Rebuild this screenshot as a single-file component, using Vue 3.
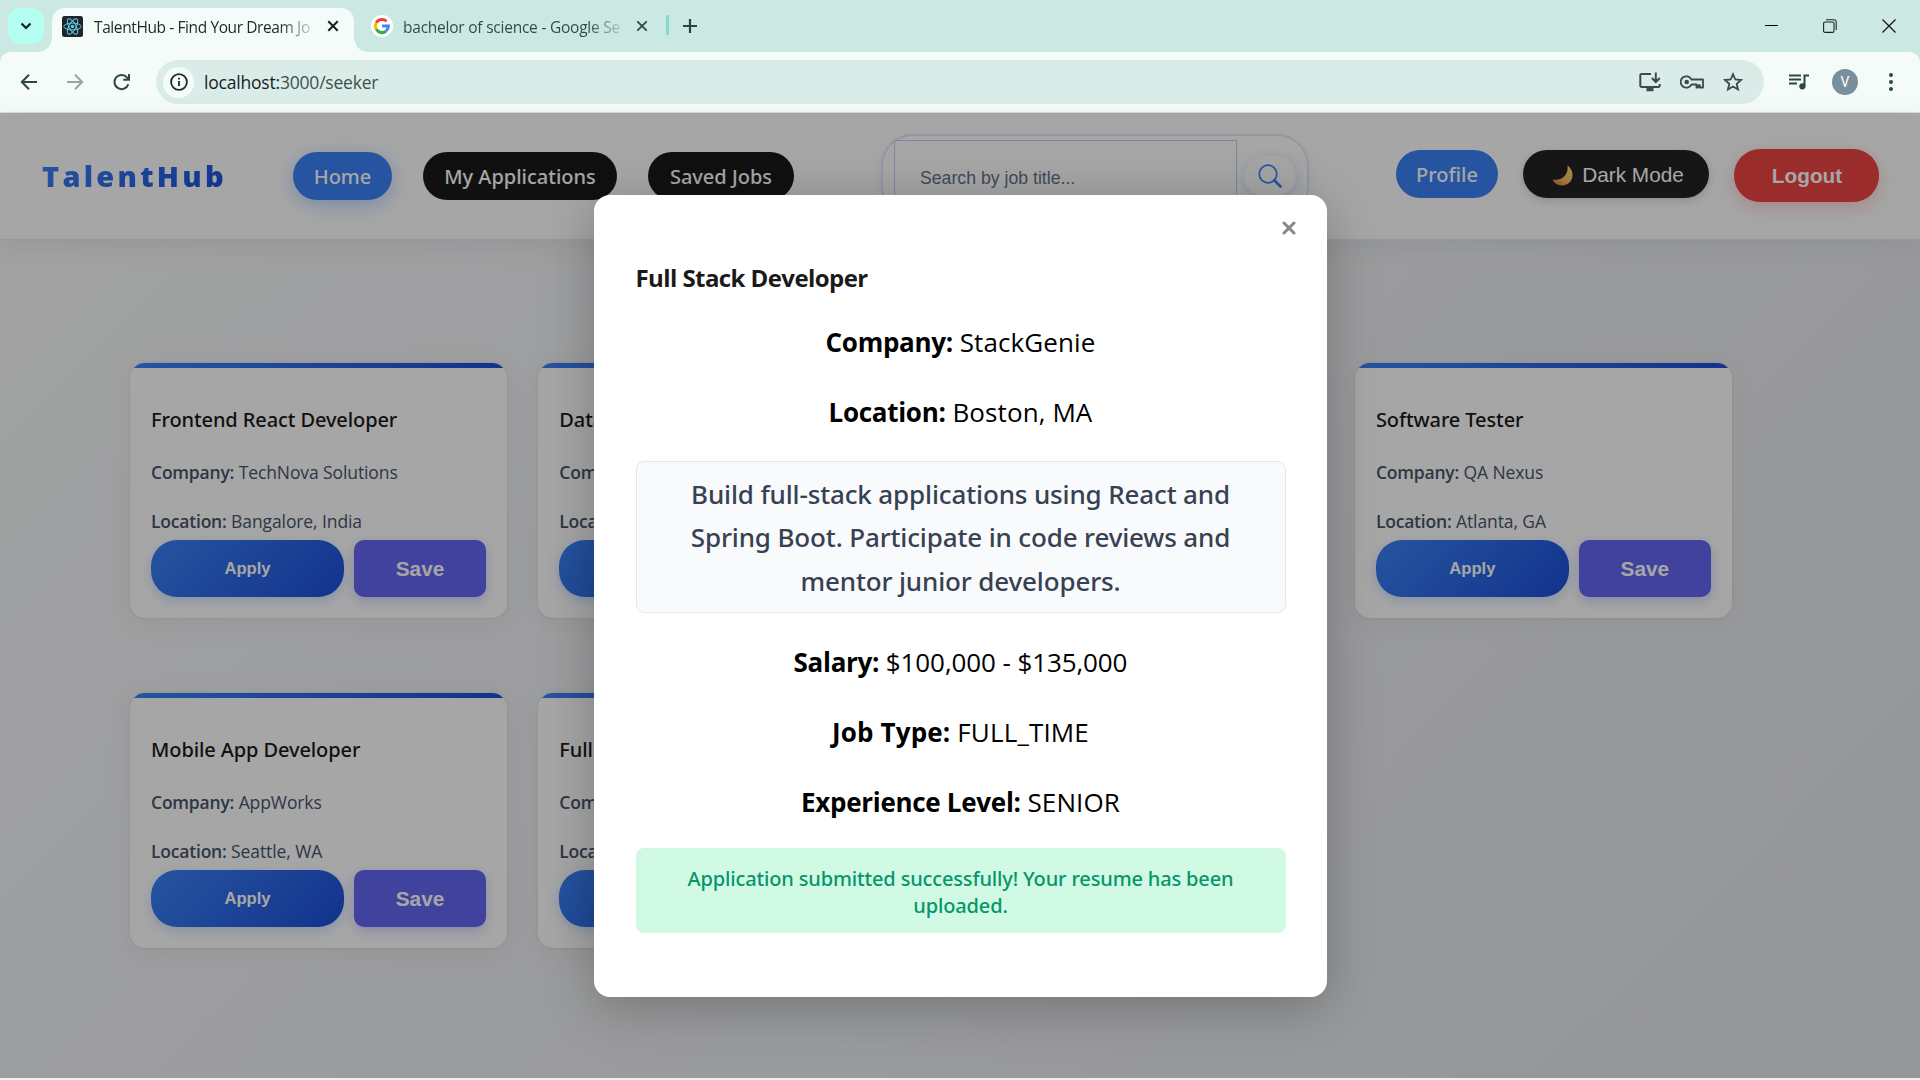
<script setup>
const jobs = [
  { title: 'Frontend React Developer', company: 'TechNova Solutions', location: 'Bangalore, India', row: 1, col: 1 },
  { title: 'Data', company: '', location: '', row: 1, col: 2 },
  { title: 'Software Tester', company: 'QA Nexus', location: 'Atlanta, GA', row: 1, col: 4 },
  { title: 'Mobile App Developer', company: 'AppWorks', location: 'Seattle, WA', row: 2, col: 1 },
  { title: 'Full Stack Developer', company: 'StackGenie', location: 'Boston, MA', row: 2, col: 2 },
]
</script>

<template>
  <div class="window">
    <div class="tabstrip">
      <button class="tab-search">
        <svg width="12" height="8" viewBox="0 0 12 8"><path d="M1.5 1.5 6 6l4.500-4.500" fill="none" stroke="#10201d" stroke-width="2.200" /></svg>
      </button>
      <div class="tab active">
        <svg class="favicon" width="21" height="21" viewBox="0 0 21 21">
          <rect width="21" height="21" rx="2.500" fill="#212429" />
          <g fill="none" stroke="#5ecbe8" stroke-width="1">
            <ellipse cx="10.500" cy="10.500" rx="8.700" ry="3.400" />
            <ellipse cx="10.500" cy="10.500" rx="8.700" ry="3.400" transform="rotate(60 10.5 10.5)" />
            <ellipse cx="10.500" cy="10.500" rx="8.700" ry="3.400" transform="rotate(120 10.5 10.5)" />
          </g>
          <circle cx="10.500" cy="10.500" r="1.700" fill="#5ecbe8" />
        </svg>
        <span class="tab-title t1">TalentHub - Find Your Dream Jo</span>
        <svg class="x" width="12" height="12" viewBox="0 0 12 12"><path d="M1.300 1.300 10.700 10.700M10.700 1.300 1.300 10.700" stroke="#141f1d" stroke-width="2" /></svg>
      </div>
      <div class="tab">
        <svg class="favicon" width="22" height="22" viewBox="0 0 22 22">
          <circle cx="11" cy="11" r="11" fill="#fff" />
          <g fill="none" stroke-width="3">
            <path d="M5.300 7.700A6.500 6.500 0 0 1 15.500 6.300" stroke="#ea4335" />
            <path d="M5.300 7.700a6.500 6.500 0 0 0 0 6.600" stroke="#fbbc05" />
            <path d="M5.300 14.300a6.500 6.500 0 0 0 9.700 1.900" stroke="#34a853" />
            <path d="M15 16.200A6.500 6.500 0 0 0 17.400 11.100H11" stroke="#4285f4" />
          </g>
        </svg>
        <span class="tab-title t2">bachelor of science - Google Se</span>
        <svg class="x" width="12" height="12" viewBox="0 0 12 12"><path d="M1.300 1.300 10.700 10.700M10.700 1.300 1.300 10.700" stroke="#2d4a45" stroke-width="1.800" /></svg>
      </div>
      <i class="sep"></i>
      <svg class="plus" width="14" height="14" viewBox="0 0 14 14"><path d="M7 0v14M0 7h14" stroke="#2a4540" stroke-width="2.200" /></svg>
      <div class="win-controls">
        <svg width="14" height="14" viewBox="0 0 14 14"><path d="M1 6.500h13" stroke="#000" /></svg>
        <svg width="14" height="14" viewBox="0 0 14 14" fill="none" stroke="#1a2422" stroke-width="1.100"><rect x=".6" y="3" width="10.400" height="10.400" rx="1.500" /><path d="M3 .8h8a2.200 2.200 0 0 1 2.200 2.200v8" /></svg>
        <svg width="14" height="14" viewBox="0 0 14 14"><path d="M.5.5l13 13M13.500.5l-13 13" stroke="#111" stroke-width="1.200" /></svg>
      </div>
    </div>

    <div class="toolbar">
      <svg class="nav-icon" width="18" height="18" viewBox="0 0 18 18" fill="none" stroke="#2c4742" stroke-width="2"><path d="M17 9H2M9 1.800 1.800 9 9 16.200" /></svg>
      <svg class="nav-icon" width="18" height="18" viewBox="0 0 18 18" fill="none" stroke="#98a5a2" stroke-width="2"><path d="M1 9h15M9 1.800 16.200 9 9 16.200" /></svg>
      <svg class="nav-icon" width="18" height="18" viewBox="0 0 18 18" fill="none" stroke="#2c4742" stroke-width="2"><path d="M16.300 11.200A7.100 7.100 0 1 1 15.100 4.600L16.500 6.200M17 1v5.800h-5.800" /></svg>
      <div class="omnibox">
        <span class="info">
          <svg width="18" height="18" viewBox="0 0 18 18"><circle cx="9" cy="9" r="7.900" fill="none" stroke="#1b2a28" stroke-width="1.800" /><path d="M9 8v5M9 4.800v1.800" stroke="#1b2a28" stroke-width="1.800" /></svg>
        </span>
        <span class="url">localhost:<span>3000/seeker</span></span>
        <div class="omni-icons">
          <svg width="22" height="20" viewBox="0 0 22 20" fill="none" stroke="#3c4a48" stroke-width="2"><path d="M12 2H2.500a1.200 1.200 0 0 0-1.200 1.200v10.600A1.200 1.200 0 0 0 2.500 15h17a1.200 1.200 0 0 0 1.200-1.200V12M16.800.5v9M12.800 6l4 4 4-4" /><path d="M7.500 17.500h7" stroke-width="3.500" /></svg>
          <svg width="24" height="16" viewBox="0 0 24 16" fill="none" stroke="#3c4a48" stroke-width="2"><path d="M11.500 5.500A5.700 5.700 0 1 0 11.500 10.500H16.500v3h1.800v-2.300h1.500v2.300H23v-8z" stroke-linejoin="round" stroke-width="1.800" /><circle cx="6.700" cy="8" r="2.300" fill="#3c4a48" stroke="none" /></svg>
          <svg width="20" height="20" viewBox="0 0 20 20"><path d="M10 2.200l2.300 5.300 5.700.5-4.300 3.800 1.300 5.700-5-3-5 3 1.300-5.700L2 8l5.700-.5z" fill="none" stroke="#3c4a48" stroke-width="1.800" /></svg>
        </div>
      </div>
      <svg class="music" width="20" height="16" viewBox="0 0 20 16" fill="none" stroke="#2c4742" stroke-width="2"><path d="M0 1.500h12M0 5.500h12M0 9.500h8M15.500 12V1.500H20" /><circle cx="13.400" cy="12.300" r="3.100" fill="#2c4742" stroke="none" /></svg>
      <span class="avatar">V</span>
      <svg class="dots" width="4" height="18" viewBox="0 0 4 18" fill="#2c4742"><circle cx="2" cy="2" r="2" /><circle cx="2" cy="9" r="2" /><circle cx="2" cy="16" r="2" /></svg>
    </div>

    <div class="page">
      <header class="header">
        <div class="logo">TalentHub</div>
        <nav class="nav">
          <a class="pill home">Home</a>
          <a class="pill apps">My Applications</a>
          <a class="pill saved">Saved Jobs</a>
        </nav>
        <div class="search">
          <div class="search-input">Search by job title...</div>
          <div class="search-btn">
            <svg width="24" height="24" viewBox="0 0 24 24" fill="none" stroke="#3b82f6"><circle cx="10" cy="10" r="8.800" stroke-width="1.700" /><path d="M16.500 16.500l6 6" stroke-width="2.700" stroke-linecap="round" /></svg>
          </div>
        </div>
        <div class="actions">
          <a class="pill profile">Profile</a>
          <button class="dark">
            <svg width="21" height="21" viewBox="0 0 21 21"><defs><linearGradient id="moon" x1="1" y1="0" x2="0" y2="1"><stop offset="0" stop-color="#ffdc70" /><stop offset=".6" stop-color="#f3b85a" /><stop offset="1" stop-color="#cf6f3c" /></linearGradient></defs><path d="M15.500.5C22 5 22 14 16.500 18.300 11 22.300 3 20.500.5 14.500 9 16.500 17 10 15.500.5z" fill="url(#moon)" /></svg>
            <span>Dark Mode</span>
          </button>
          <button class="logout">Logout</button>
        </div>
      </header>

      <main class="grid">
        <article v-for="job in jobs" :key="job.title" class="card" :style="{ gridRow: job.row, gridColumn: job.col }">
          <h3>{{ job.title }}</h3>
          <p><strong>Company:</strong> {{ job.company }}</p>
          <p><strong>Location:</strong> {{ job.location }}</p>
          <div class="buttons">
            <button class="apply">Apply</button>
            <button v-if="job.col !== 2" class="save">Save</button>
          </div>
        </article>
      </main>

      <div class="overlay">
        <section class="modal">
          <svg class="close" width="14" height="14" viewBox="0 0 14 14"><path d="M2 2l10 10M12 2 2 12" stroke="#888" stroke-width="3" stroke-linecap="round" /></svg>
          <h2>Full Stack Developer</h2>
          <p class="line"><strong>Company:</strong> StackGenie</p>
          <p class="line"><strong>Location:</strong> Boston, MA</p>
          <div class="desc">Build full-stack applications using React and<br />Spring Boot. Participate in code reviews and<br />mentor junior developers.</div>
          <p class="line salary"><strong>Salary:</strong> $100,000 - $135,000</p>
          <p class="line type"><strong>Job Type:</strong> FULL_TIME</p>
          <p class="line"><strong>Experience Level:</strong> SENIOR</p>
          <div class="alert">Application submitted successfully! Your resume has been<br />uploaded.</div>
        </section>
      </div>
    </div>
    <div class="bottom"></div>
  </div>
</template>

<style>
body {
  margin: 0;
  overflow: hidden;
}
</style>

<style scoped>
* {
  box-sizing: border-box;
}
.window {
  width: 1920px;
  height: 1080px;
  display: flex;
  flex-direction: column;
  overflow: hidden;
  font-family: "Open Sans", "Noto Sans", sans-serif;
  background: #f4fbf9;
}
svg {
  flex: none;
  display: block;
}
button {
  border: 0;
  padding: 0;
  font-family: "Liberation Sans", Arial, sans-serif;
}
.tabstrip {
  height: 52px;
  flex: none;
  display: flex;
  align-items: flex-start;
  background: #cce8e2;
  padding: 8px 23px 0 8px;
}
.tab-search {
  width: 36px;
  height: 36px;
  border-radius: 12px;
  background: #b4fff1;
  display: flex;
  align-items: center;
  justify-content: center;
  margin-right: 8px;
}
.tab {
  display: flex;
  align-items: center;
  height: 36px;
  padding-left: 17px;
}
.tab.active {
  position: relative;
  width: 302px;
  height: 44px;
  padding: 0 0 8px 10px;
  border-radius: 13px 13px 0 0;
  background: #f4fbf9;
}
.tab.active::before,
.tab.active::after {
  content: "";
  position: absolute;
  bottom: 0;
  width: 14px;
  height: 14px;
}
.tab.active::before {
  left: -14px;
  background: radial-gradient(circle at 0 0, transparent 13.500px, #f4fbf9 14px);
}
.tab.active::after {
  right: -14px;
  background: radial-gradient(circle at 100% 0, transparent 13.500px, #f4fbf9 14px);
}
.tab-title {
  font-size: 15.500px;
  line-height: 22px;
  margin: 2px 16px 0 11px;
  width: 217px;
  white-space: nowrap;
  overflow: hidden;
  color: transparent;
  background-clip: text;
  -webkit-background-clip: text;
}
.t1 {
  letter-spacing: -0.4px;
  background-image: linear-gradient(90deg, #1b2a28 85%, #1b2a2833 100%);
}
.t2 {
  letter-spacing: -0.23px;
  margin-left: 10px;
  background-image: linear-gradient(90deg, #2d4a45 85%, #2d4a4533 100%);
}
.sep {
  width: 3px;
  height: 20px;
  margin: 7px 0 0 18px;
  border-radius: 1px;
  background: #82ddcf;
}
.plus {
  margin: 11px 0 0 14px;
}
.win-controls {
  display: flex;
  gap: 45px;
  margin: 11px 1px 0 auto;
}
.toolbar {
  height: 60px;
  flex: none;
  display: flex;
  align-items: center;
  padding: 0 27px 0 20px;
  background: radial-gradient(circle at 100% 100%, #f4fbf9 9.500px, #cce8e2 10px) 0 0 / 10px 10px no-repeat,
    radial-gradient(circle at 0 100%, #f4fbf9 9.500px, #cce8e2 10px) 100% 0 / 10px 10px no-repeat, #f4fbf9;
}
.nav-icon {
  margin-right: 28px;
}
.nav-icon:nth-child(3) {
  margin-right: 26px;
}
.omnibox {
  width: 1608px;
  height: 44px;
  border-radius: 22px;
  background: #daece8;
  display: flex;
  align-items: center;
  padding: 0 21px 0 7px;
}
.info {
  width: 31px;
  height: 31px;
  border-radius: 50%;
  background: #f4fbf9;
  display: flex;
  align-items: center;
  justify-content: center;
}
.url {
  margin-left: 10px;
  font-size: 17.500px;
  letter-spacing: -0.2px;
  color: #16211f;
}
.url span {
  color: #40514e;
}
.omni-icons {
  margin-left: auto;
  display: flex;
  align-items: center;
  gap: 19px;
}
.music {
  margin-left: 25px;
}
.avatar {
  width: 26px;
  height: 26px;
  margin-left: 23px;
  border-radius: 50%;
  background: #78909c;
  color: #fff;
  font: 14px/26px Roboto, sans-serif;
  text-align: center;
}
.dots {
  margin-left: auto;
}
.page {
  position: relative;
  height: 966px;
  flex: none;
  border-top: 1px solid #d3dfdc;
  background: linear-gradient(135deg, #f8f9fa, #e5e7eb);
}
.header {
  height: 127px;
  background: #fff;
  border-bottom: 1px solid #e9e9f2;
  box-shadow: 0 5px 26px rgba(0, 0, 0, 0.07);
  display: flex;
  align-items: center;
  padding: 0 41px 0 42px;
}
.logo {
  width: 251px;
  font: 800 29px/40px "Open Sans", sans-serif;
  letter-spacing: 3.250px;
  color: transparent;
  background: linear-gradient(135deg, #3b82f6, #1d4ed8) 0 0 / 183px 100% no-repeat;
  background-clip: text;
  -webkit-background-clip: text;
}
.nav {
  display: flex;
  gap: 31px;
}
.pill {
  height: 48px;
  border-radius: 26px;
  background: #1a1a1a;
  color: #fff;
  font: 500 20px/49px "Noto Sans", sans-serif;
  text-align: center;
}
.home {
  width: 99px;
  background: #3b82f6;
  box-shadow: 0 5px 20px rgba(59, 130, 246, 0.35);
}
.apps {
  width: 194px;
}
.saved {
  width: 146px;
}
.search {
  width: 428px;
  height: 84px;
  margin-left: 87px;
  border: 2px solid #e2e8f0;
  border-radius: 32px;
  box-shadow: 0 5px 20px rgba(0, 0, 0, 0.05);
  display: flex;
  align-items: center;
  padding-left: 11px;
}
.search-input {
  width: 343px;
  height: 72px;
  border: 1px solid #c3cdf5;
  padding-left: 25px;
  background: #fff;
  color: #64748b;
  font: 17.680px/74px "Liberation Sans", Arial, sans-serif;
}
.search-btn {
  width: 52px;
  height: 40px;
  margin-left: 7px;
  border-radius: 24px;
  background: #fdfdff;
  box-shadow: 0 3px 14px rgba(59, 130, 246, 0.25);
  display: flex;
  align-items: center;
  justify-content: center;
}
.actions {
  margin-left: auto;
  margin-bottom: 2px;
  display: flex;
  align-items: center;
}
.profile {
  width: 102px;
  background: #3b82f6;
  margin: 0 25px 3px 0;
}
.dark {
  width: 186px;
  height: 48px;
  border-radius: 24px;
  background: #232323;
  color: #fff;
  font-size: 20.800px;
  display: flex;
  align-items: center;
  justify-content: center;
  gap: 9px;
  padding: 3px 0 0 4px;
  margin: 0 25px 3px 0;
  box-shadow: 0 3px 10px rgba(0, 0, 0, 0.15);
}
.logout {
  width: 145px;
  height: 53px;
  padding: 1px 0 0 1px;
  border-radius: 26px;
  background: #ef4444;
  color: #fff;
  font-size: 20.800px;
  font-weight: 700;
  box-shadow: 0 5px 18px rgba(239, 68, 68, 0.25);
}
.grid {
  display: grid;
  grid-template-columns: repeat(4, 377px);
  grid-template-rows: 255px 255px;
  gap: 75px 31.300px;
  padding: 123px 0 0 130px;
}
.card {
  position: relative;
  overflow: hidden;
  border-radius: 15px;
  background: #fff;
  padding: 43px 21px 0;
  box-shadow: 0 0 0 1px rgba(200, 205, 235, 0.3), 0 5px 26px rgba(0, 0, 0, 0.06);
}
.card::before {
  content: "";
  position: absolute;
  left: 0;
  right: 0;
  top: 0;
  height: 5px;
  background: linear-gradient(90deg, #3b82f6, #1d4ed8);
}
.card h3 {
  margin: 0 0 26px;
  font: 500 20px/28px "Noto Sans", sans-serif;
  letter-spacing: -0.1px;
  color: #1a1a1a;
  white-space: nowrap;
}
.card p {
  margin: 0 0 25px;
  font-size: 17.500px;
  line-height: 24px;
  letter-spacing: -0.1px;
  color: #475569;
  white-space: nowrap;
}
.card p:nth-of-type(2) {
  margin-bottom: 7px;
}
.card strong {
  font-weight: 600;
  letter-spacing: -0.2px;
}
.buttons {
  display: flex;
  gap: 10px;
}
.buttons button {
  height: 57px;
  color: #fff;
  font-weight: 700;
}
.apply {
  width: 193px;
  border-radius: 26px;
  background: linear-gradient(135deg, #3b82f6, #1d4ed8);
  font-size: 16.640px;
  box-shadow: 0 4px 12px rgba(59, 130, 246, 0.25);
}
.save {
  width: 132px;
  border-radius: 10px;
  background: #6366f1;
  font-size: 20.800px;
  box-shadow: 0 4px 12px rgba(99, 102, 241, 0.3);
}
.overlay {
  position: absolute;
  inset: 0;
  background: rgba(0, 0, 0, 0.35);
  display: flex;
  justify-content: center;
  align-items: flex-start;
}
.modal {
  position: relative;
  width: 733px;
  height: 802px;
  margin-top: 82px;
  padding: 66px 41px 0 42px;
  border-radius: 16px;
  background: #fff;
  box-shadow: 0 10px 52px rgba(0, 0, 0, 0.25);
  text-align: center;
}
.close {
  position: absolute;
  right: 31px;
  top: 26px;
}
.modal h2 {
  margin: 0 0 25px;
  font-size: 24px;
  line-height: 34px;
  letter-spacing: -0.580px;
  font-weight: 700;
  color: #1a1a1a;
  text-align: left;
}
.line {
  margin: 0 0 26px;
  font-size: 26px;
  line-height: 44px;
  letter-spacing: 0.1px;
  color: #000;
}
.line strong {
  letter-spacing: -0.3px;
}
.salary {
  letter-spacing: -0.1px;
}
.type,
.type strong {
  letter-spacing: 0.150px;
}
.desc {
  height: 152px;
  margin: 27px 0;
  padding-top: 11px;
  border: 1px solid #e2e8f0;
  border-radius: 8px;
  background: #f8fafc;
  color: #374151;
  font: 500 26px/43.300px "Noto Sans", sans-serif;
  letter-spacing: -0.140px;
}
.alert {
  height: 85px;
  margin-top: -2px;
  padding-top: 17px;
  border-radius: 8px;
  background: #d1fae5;
  color: #059669;
  font: 500 20px/27px "Noto Sans", sans-serif;
  letter-spacing: -0.150px;
}
.bottom {
  height: 2px;
  background: #f0f0f0;
}
</style>
